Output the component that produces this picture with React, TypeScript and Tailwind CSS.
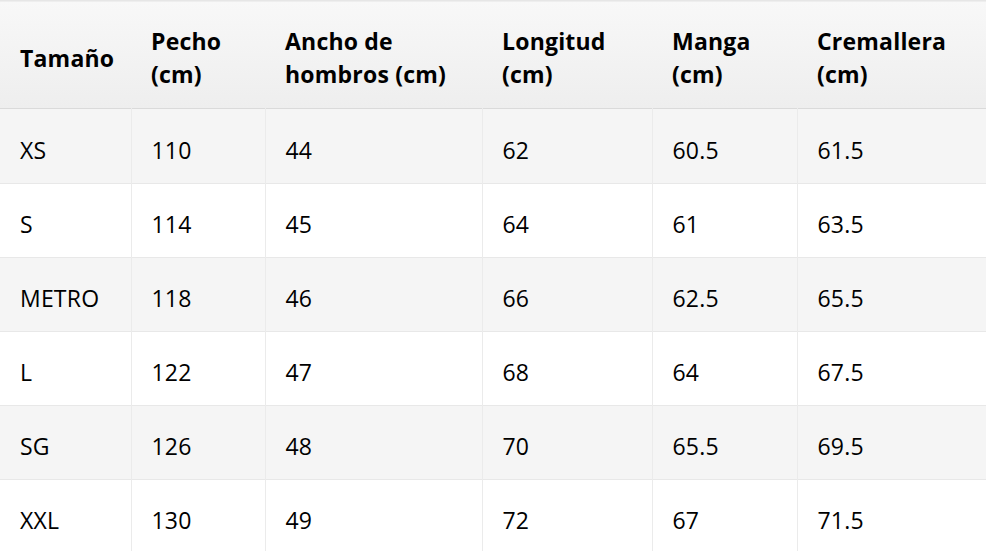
const headers = [
  ["Tamaño"],
  ["Pecho", "(cm)"],
  ["Ancho de", "hombros (cm)"],
  ["Longitud", "(cm)"],
  ["Manga", "(cm)"],
  ["Cremallera", "(cm)"],
];

const rows = [
  ["XS", "110", "44", "62", "60.5", "61.5"],
  ["S", "114", "45", "64", "61", "63.5"],
  ["METRO", "118", "46", "66", "62.5", "65.5"],
  ["L", "122", "47", "68", "64", "67.5"],
  ["SG", "126", "48", "70", "65.5", "69.5"],
  ["XXL", "130", "49", "72", "67", "71.5"],
];

const widths = ["w-[131px]", "w-[134px]", "w-[217px]", "w-[170px]", "w-[145px]", "w-[213px]"];

export default function App() {
  return (
    <div className="w-[986px] h-[551px] overflow-hidden bg-white">
      <table
        className="w-[1010px] table-fixed border-collapse text-[23px] leading-[33px] text-black"
        style={{ fontFamily: '"Open Sans", "Noto Sans", sans-serif' }}
      >
        <colgroup>
          {widths.map((w, i) => (
            <col key={i} className={w} />
          ))}
        </colgroup>
        <thead>
          <tr className="bg-gradient-to-b from-[#f8f8f8] to-[#eeeeee] border-t border-t-[#e6e6e6] border-b border-b-[#dadada]">
            {headers.map((h, i) => (
              <th key={i} className="px-5 pt-[24px] pb-[17px] text-left align-middle font-bold tracking-[0.2px]">
                {h.map((line, j) => (
                  <div key={j} className="whitespace-nowrap">{line}</div>
                ))}
              </th>
            ))}
          </tr>
        </thead>
        <tbody>
          {rows.map((r, i) => (
            <tr key={i} className={`border-b border-[#e8e8e8] ${i % 2 === 0 ? "bg-[#f5f5f5]" : "bg-white"}`}>
              {r.map((c, j) => (
                <td
                  key={j}
                  className={`px-5 ${i === 0 ? "pt-[25px]" : "pt-[24px]"} pb-[16px] align-middle tracking-[0.2px] ${j > 0 ? "border-l border-[#ebebeb]" : ""}`}
                >
                  {c}
                </td>
              ))}
            </tr>
          ))}
        </tbody>
      </table>
    </div>
  );
}
